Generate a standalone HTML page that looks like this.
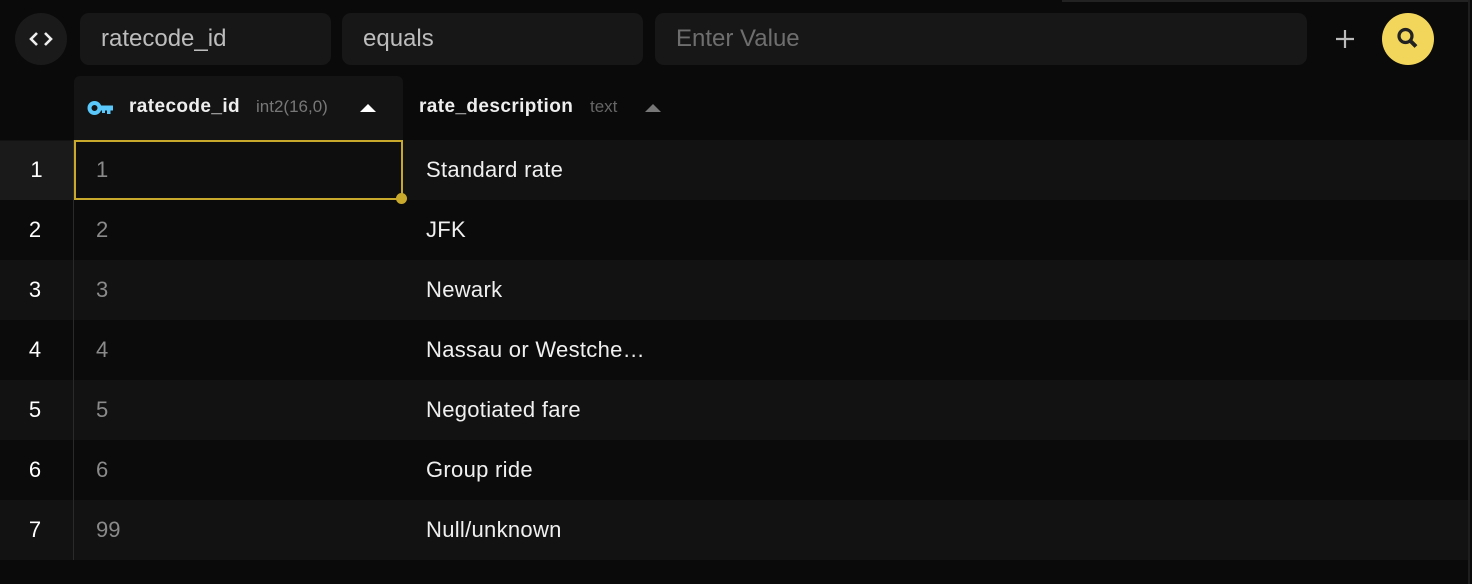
<!DOCTYPE html><html><head><style>
body{margin:0;width:1472px;height:584px;background:#0a0a0a;font-family:"Liberation Sans",sans-serif;overflow:hidden;position:relative}
.a{position:absolute}
.inp{position:absolute;top:13px;height:52px;background:#171717;border-radius:9px;color:#bdbdbd;font-size:24px;line-height:52px;padding-left:21px;box-sizing:border-box}
.row{position:absolute;left:0;width:1468px;height:60px;font-size:22px;color:#fff}
.row .n{position:absolute;left:0;width:70px;text-align:center;line-height:60px}
.row .v{position:absolute;left:96px;line-height:60px;color:#8a8a8a}
.row .d{position:absolute;left:426px;line-height:60px;color:#f0f0f0;letter-spacing:0.3px}
</style></head><body>
<div class="a" style="left:1062px;top:0;width:406px;height:2px;background:#222"></div>
<div class="a" style="left:1468px;top:0;width:2px;height:584px;background:#1e1e1e"></div>
<div class="a" style="left:15px;top:13px;width:52px;height:52px;border-radius:50%;background:#1a1a1a"></div>
<svg class="a" style="left:27px;top:27px" width="28" height="24" viewBox="0 0 28 24"><path d="M10 6L4 12L10 18M18 6L24 12L18 18" stroke="#eee" stroke-width="2.6" fill="none"/></svg>
<div class="inp" style="left:80px;width:251px">ratecode_id</div>
<div class="inp" style="left:342px;width:301px">equals</div>
<div class="inp" style="left:655px;width:652px;color:#6e6e6e">Enter Value</div>
<svg class="a" style="left:1334px;top:28px" width="22" height="22"><path d="M11 2V20M2 11H20" stroke="#bbb" stroke-width="2.2"/></svg>
<div class="a" style="left:1382px;top:13px;width:52px;height:52px;border-radius:50%;background:#f2d65c"></div>
<svg class="a" style="left:1394px;top:25px" width="28" height="28"><circle cx="11.5" cy="11" r="6.5" stroke="#222" stroke-width="3.2" fill="none"/><path d="M16 15.5L22 21.5" stroke="#222" stroke-width="4"/></svg>
<div class="a" style="left:74px;top:76px;width:329px;height:64px;background:#141414;border-radius:6px 6px 0 0"></div>
<svg class="a" style="left:87px;top:98px" width="28" height="20"><circle cx="7.5" cy="10" r="5" stroke="#5ac8fa" stroke-width="4" fill="none"/><path d="M12 7.5H26V12.5H23.5V16H20V12.5H18V15H15V12.5H12Z" fill="#5ac8fa"/></svg>
<div class="a" style="left:129px;top:96px;font-size:19px;font-weight:bold;color:#eee;letter-spacing:0.4px">ratecode_id</div>
<div class="a" style="left:256px;top:97px;font-size:17px;color:#777">int2(16,0)</div>
<svg class="a" style="left:360px;top:103px" width="16" height="10"><path d="M0 9L8 1L16 9Z" fill="#fff"/></svg>
<div class="a" style="left:419px;top:96px;font-size:19px;font-weight:bold;color:#eee;letter-spacing:0.4px">rate_description</div>
<div class="a" style="left:590px;top:97px;font-size:17px;color:#666">text</div>
<svg class="a" style="left:645px;top:103px" width="16" height="10"><path d="M0 9L8 1L16 9Z" fill="#777"/></svg>
<div class="a" style="left:0;top:140px;width:1468px;height:2px;background:#262626"></div>
<div class="row" style="top:140px;background:#121212"><div class="n">1</div><div class="v">1</div><div class="d">Standard rate</div></div>
<div class="row" style="top:200px;background:#0b0b0b"><div class="n">2</div><div class="v">2</div><div class="d">JFK</div></div>
<div class="row" style="top:260px;background:#121212"><div class="n">3</div><div class="v">3</div><div class="d">Newark</div></div>
<div class="row" style="top:320px;background:#0b0b0b"><div class="n">4</div><div class="v">4</div><div class="d">Nassau or Westche…</div></div>
<div class="row" style="top:380px;background:#121212"><div class="n">5</div><div class="v">5</div><div class="d">Negotiated fare</div></div>
<div class="row" style="top:440px;background:#0b0b0b"><div class="n">6</div><div class="v">6</div><div class="d">Group ride</div></div>
<div class="row" style="top:500px;background:#121212"><div class="n">7</div><div class="v">99</div><div class="d">Null/unknown</div></div>
<div class="a" style="left:0;top:141px;width:73px;height:59px;background:#1a1a1a;color:#fff;font-size:22px;line-height:58px;text-align:center">1</div>
<div class="a" style="left:73px;top:140px;width:1px;height:420px;background:#2a2a2a"></div>
<div class="a" style="left:74px;top:140px;width:329px;height:60px;border:2px solid #c9a92c;box-sizing:border-box;background:#0e0e0e;color:#8a8a8a;font-size:22px;line-height:56px;padding-left:20px">1</div>
<div class="a" style="left:396px;top:193px;width:11px;height:11px;border-radius:50%;background:#c9a92c"></div>
</body></html>
